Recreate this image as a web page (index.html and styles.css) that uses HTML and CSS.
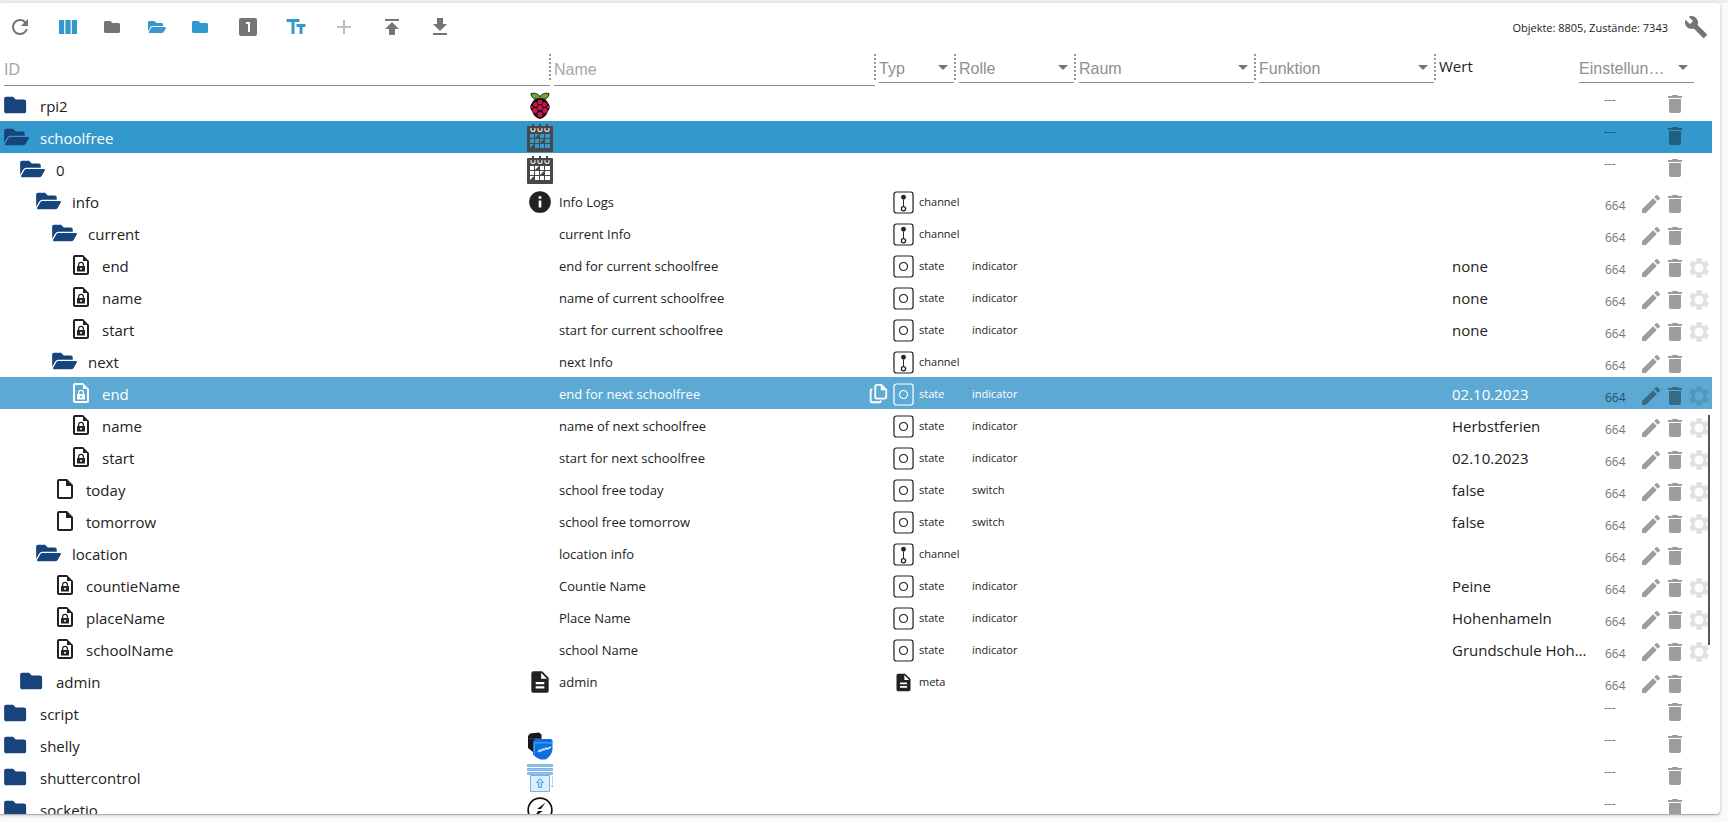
FILE: index.html
```html
<!DOCTYPE html>
<html lang="de">
<head>
    <meta charset="UTF-8">
    <meta name="viewport" content="width=device-width, initial-scale=1.0">
    <title>Objekte</title>
    <link rel="stylesheet" href="styles.css">
</head>
<body>
    <svg class="sprite" aria-hidden="true">
        <symbol id="refresh" viewBox="0 0 24 24"><path d="M17.65 6.35A7.96 7.96 0 0 0 12 4a8 8 0 1 0 7.73 10h-2.08A6 6 0 1 1 12 6c1.66 0 3.14.69 4.22 1.78L13 11h7V4z"/></symbol>
        <symbol id="columns" viewBox="0 0 24 24"><path d="M9.4 19h5.2V5H9.4zM3 19h5.2V5H3zM15.8 5v14H21V5z"/></symbol>
        <symbol id="folder" viewBox="0 0 576 512"><path d="M464 128H272l-64-64H48C21.5 64 0 85.5 0 112v288c0 26.5 21.5 48 48 48h416c26.5 0 48-21.5 48-48V176c0-26.5-21.5-48-48-48z"/></symbol>
        <symbol id="folder-open" viewBox="0 0 576 512"><path d="M572.7 292.1 500.3 416.2A64 64 0 0 1 445 448H45c-18.5 0-30-20-20.7-36l72.4-124.2A64 64 0 0 1 152 256h400c18.5 0 30 20 20.7 36.1zM152 224h328v-48c0-26.5-21.5-48-48-48H272l-64-64H48C21.5 64 0 85.5 0 112v278l69-118.4C86.2 242.2 118 224 152 224z"/></symbol>
        <symbol id="one" viewBox="0 0 24 24"><path d="M19 3H5a2 2 0 0 0-2 2v14c0 1.1.9 2 2 2h14a2 2 0 0 0 2-2V5a2 2 0 0 0-2-2zm-5 14h-2V9h-2V7h4z"/></symbol>
        <symbol id="text-size" viewBox="0 0 24 24"><path d="M2.5 4v3h5v12h3V7h5V4zm19 5h-9v3h3v7h3v-7h3z"/></symbol>
        <symbol id="plus" viewBox="0 0 24 24"><path d="M19 13h-6v6h-2v-6H5v-2h6V5h2v6h6z"/></symbol>
        <symbol id="upload" viewBox="0 0 24 24"><path d="M5 4v2h14V4zm0 10h4v6h6v-6h4l-7-7z"/></symbol>
        <symbol id="download" viewBox="0 0 24 24"><path d="M19 9h-4V3H9v6H5l7 7zM5 18v2h14v-2z"/></symbol>
        <symbol id="wrench" viewBox="0 0 24 24"><path d="m22.7 19-9.1-9.1c.9-2.3.4-5-1.5-6.9-2-2-5-2.4-7.4-1.3L9 6 6 9 1.6 4.7C.4 7.1.9 10.1 2.9 12.1c1.9 1.9 4.6 2.4 6.9 1.5l9.1 9.1c.4.4 1 .4 1.4 0l2.3-2.3c.5-.4.5-1.1.1-1.4z"/></symbol>
        <symbol id="edit" viewBox="0 0 24 24"><path d="M3 17.25V21h3.75L17.81 9.94l-3.75-3.75zM20.71 7.04a1 1 0 0 0 0-1.41l-2.34-2.34a1 1 0 0 0-1.41 0l-1.83 1.83 3.75 3.75z"/></symbol>
        <symbol id="trash" viewBox="0 0 24 24"><path d="M6 19c0 1.1.9 2 2 2h8a2 2 0 0 0 2-2V7H6zM19 4h-3.5l-1-1h-5l-1 1H5v2h14z"/></symbol>
        <symbol id="gear" viewBox="0 0 24 24"><path d="M19.43 12.98a7.8 7.8 0 0 0 0-1.96l2.11-1.65a.5.5 0 0 0 .12-.64l-2-3.46a.5.5 0 0 0-.61-.22l-2.49 1a7.3 7.3 0 0 0-1.69-.98l-.38-2.65A.5.5 0 0 0 14 2h-4a.5.5 0 0 0-.49.42l-.38 2.65c-.61.25-1.17.59-1.69.98l-2.49-1a.5.5 0 0 0-.61.22l-2 3.46a.5.5 0 0 0 .12.64l2.11 1.65a7.9 7.9 0 0 0 0 1.96l-2.11 1.65a.5.5 0 0 0-.12.64l2 3.46c.12.22.39.3.61.22l2.49-1c.52.4 1.08.73 1.69.98l.38 2.65c.03.24.24.42.49.42h4c.25 0 .46-.18.49-.42l.38-2.65c.61-.25 1.17-.59 1.69-.98l2.49 1c.23.09.49 0 .61-.22l2-3.46a.5.5 0 0 0-.12-.64zM12 16.5a4.5 4.5 0 1 1 0-9 4.5 4.5 0 0 1 0 9z"/></symbol>
        <symbol id="file" viewBox="0 0 24 24"><path d="M14 2H6a2 2 0 0 0-2 2v16c0 1.1.9 2 2 2h12a2 2 0 0 0 2-2V8zM6 20V4h7v5h5v11z"/></symbol>
        <symbol id="file-lock" viewBox="0 0 24 24"><path d="M14 2H6a2 2 0 0 0-2 2v16c0 1.1.9 2 2 2h12a2 2 0 0 0 2-2V8zM6 20V4h8v4h4v12z"/><path d="M15 13v-1.2a3 3 0 0 0-6 0V13H8v5.5h8V13zm-4.800 0v-1.2a1.800 1.800 0 0 1 3.600 0V13zm1.800 3.700a1 1 0 1 1 0-2 1 1 0 0 1 0 2z"/></symbol>
        <symbol id="document" viewBox="0 0 24 24"><path d="M14 2H6a2 2 0 0 0-2 2v16c0 1.1.9 2 2 2h12a2 2 0 0 0 2-2V8zm2 16H8v-2h8zm0-4H8v-2h8zm-3-5V3.5L18.5 9z"/></symbol>
        <symbol id="info" viewBox="0 0 24 24"><path d="M12 2a10 10 0 1 0 0 20 10 10 0 0 0 0-20zm1.200 15h-2.400v-6.500h2.400zm0-8h-2.400V6.600h2.400z"/></symbol>
        <symbol id="copy" viewBox="0 0 24 24"><path d="M16 1h-5a3 3 0 0 0-3 3v11a3 3 0 0 0 3 3h8a3 3 0 0 0 3-3V7zm-5 15a1 1 0 0 1-1-1V4a1 1 0 0 1 1-1h4v5h5v7a1 1 0 0 1-1 1zM6 6v2H5v12h9v-1h2v1a2 2 0 0 1-2 2H5a2 2 0 0 1-2-2V8a2 2 0 0 1 2-2z"/></symbol>
        <symbol id="state" viewBox="0 0 22 24"><rect x="1" y="1" width="20" height="22" rx="2.500" fill="none" stroke="currentColor" stroke-width="1.300"/><circle cx="11" cy="12" r="4.200" fill="none" stroke="currentColor" stroke-width="1.200"/></symbol>
        <symbol id="channel" viewBox="0 0 22 24"><rect x="1" y="1" width="20" height="22" rx="2.500" fill="none" stroke="currentColor" stroke-width="1.300"/><circle cx="11" cy="6.500" r="2.500"/><path d="M10.500 9h1v7h-1z"/><circle cx="11" cy="18.500" r="2.200" fill="none" stroke="currentColor" stroke-width="1.400"/></symbol>
        <symbol id="raspberry" viewBox="0 0 26 28">
            <path fill="#6aa636" stroke="#1f2a12" d="M12.500 7C8 8 4 6 4 1.500 8 .5 12 2 13 5c1-3 5-4.500 9-3.500C22 6 18 8 13.500 7z"/>
            <path fill="#2a0a14" d="M13 6c5 0 7 2.500 8 5 2 1.500 2.500 6 0 8-1 4-4 7-8 8-4-1-7-4-8-8-2.500-2-2-6.500 0-8 1-2.500 3-5 8-5z"/>
            <g fill="#c51a4a"><circle cx="13" cy="10" r="2.300"/><circle cx="8.500" cy="12.500" r="2.300"/><circle cx="17.500" cy="12.500" r="2.300"/><circle cx="13" cy="15.500" r="2.600"/><circle cx="8" cy="18.500" r="2.500"/><circle cx="18" cy="18.500" r="2.500"/><circle cx="13" cy="22.500" r="2.600"/><circle cx="4.800" cy="15" r="1.200"/><circle cx="21.200" cy="15" r="1.200"/></g>
        </symbol>
        <symbol id="calendar" viewBox="0 0 26 28">
            <path fill="#484848" fill-rule="evenodd" d="M1 2h4V0h2v2h5V0h2v2h5V0h2v2h4a1 1 0 0 1 1 1v24a1 1 0 0 1-1 1H1a1 1 0 0 1-1-1V3a1 1 0 0 1 1-1zm2 8v4h4v-4zm5 0v4l4-4zm5 0v4h4v-4zm5 0v4h5v-4zM3 15v4h4v-4zm5 0v4h4v-4zm5 0v4l4-4zm5 0v4h5v-4zM3 20v4l4-4zm5 0v4h4v-4zm5 0v4h4v-4zm5 0v4h5v-4z"/>
            <path fill="none" stroke="#ddd" stroke-width="1.200" d="M4 4v1.500a2 2 0 0 0 4 0V4m3 0v1.500a2 2 0 0 0 4 0V4m3 0v1.500a2 2 0 0 0 4 0V4"/>
        </symbol>
        <symbol id="shelly" viewBox="0 0 26 28">
            <path fill="#15181d" d="M3 1.500 12 .5l2.500 2V20H6l-5-4V4z"/><path fill="#3c4148" d="M2 6h12v1H2z"/>
            <path fill="#0b6fe0" d="m6 9 2-2h16l1.500 1.500V18c-1 4-3 7.500-7 9.500h-5c-3-1-5.500-3-7.500-5z"/><path fill="#3b9bff" d="M7 10h18v1.500H8V22H7z"/>
            <path fill="none" stroke="#d5eaff" stroke-width="1.500" d="m11 20 2-2 1 1 2-2 1 1 2-2 1 1 4-2"/>
        </symbol>
        <symbol id="shutter" viewBox="0 0 26 28">
            <path fill="#d9efff" stroke="#7db4e4" d="M3.500 11.500h19v16h-19z"/>
            <path fill="#9ac8f0" stroke="#7db4e4" d="M.5.5h25v2H.5zm0 4h25v2H.5zm0 4h25v2H.5z"/>
            <path fill="#b9dcf8" stroke="#5f9ed6" d="m13 14.500 3.500 4h-2v5h-3v-5h-2z"/><path fill="#7db4e4" d="M25 12h.5v9H25zm-.5 9.500h1.500V23h-1.500z"/>
        </symbol>
        <symbol id="socket" viewBox="0 0 28 28"><circle cx="14" cy="14" r="12.800" fill="#fff" stroke="#111" stroke-width="1.800"/><path fill="#111" d="m20 6-9 7h4zM8 21.500l9-6.500h-5z"/></symbol>
    </svg>

    <main class="panel">
        <header class="toolbar">
            <button class="tool" aria-label="Aktualisieren"><svg><use href="#refresh"/></svg></button>
            <button class="tool active" aria-label="Spalten"><svg><use href="#columns"/></svg></button>
            <button class="tool small" aria-label="Alle zuklappen"><svg><use href="#folder"/></svg></button>
            <button class="tool small active" aria-label="Alle aufklappen"><svg><use href="#folder-open"/></svg></button>
            <button class="tool small active" aria-label="Ordner"><svg><use href="#folder"/></svg></button>
            <button class="tool" aria-label="Ebene 1"><svg><use href="#one"/></svg></button>
            <button class="tool active" aria-label="Textgröße"><svg><use href="#text-size"/></svg></button>
            <button class="tool" aria-label="Hinzufügen" disabled><svg><use href="#plus"/></svg></button>
            <button class="tool" aria-label="Hochladen"><svg><use href="#upload"/></svg></button>
            <button class="tool" aria-label="Herunterladen"><svg><use href="#download"/></svg></button>
            <span class="stats">Objekte: 8805, Zustände: 7343</span>
            <button class="tool" aria-label="Werkzeuge"><svg><use href="#wrench"/></svg></button>
        </header>

        <div class="browser">
            <table class="objects">
                <colgroup>
                    <col class="col-id"><col class="col-name"><col class="col-type"><col class="col-role"><col class="col-room"><col class="col-func"><col class="col-value"><col class="col-rest"><col class="col-settings">
                </colgroup>
                <thead>
                    <tr>
                        <th class="split"><input class="filter" placeholder="ID" aria-label="ID"></th>
                        <th class="split"><input class="filter" placeholder="Name" aria-label="Name"></th>
                        <th class="split"><div class="dropdown"><select aria-label="Typ"><option>Typ</option></select></div></th>
                        <th class="split"><div class="dropdown"><select aria-label="Rolle"><option>Rolle</option></select></div></th>
                        <th class="split"><div class="dropdown"><select aria-label="Raum"><option>Raum</option></select></div></th>
                        <th class="split"><div class="dropdown"><select aria-label="Funktion"><option>Funktion</option></select></div></th>
                        <th class="value-head">Wert</th>
                        <th class="settings-head" colspan="2"><div class="dropdown"><select aria-label="Einstellungen"><option>Einstellungen</option></select></div></th>
                    </tr>
                </thead>
                <tbody id="rows"></tbody>
            </table>
            <div class="scrollbar"></div>
        </div>
    </main>

    <script src="objects.js"></script>
</body>
</html>
```

FILE: objects.js
```js
// level, id, tree icon, own icon, name, type, role, value, row class
const objects = [
    [0, 'rpi2', 'folder', 'raspberry'],
    [0, 'schoolfree', 'folder-open', 'calendar', '', '', '', '', 'selected'],
    [1, '0', 'folder-open', 'calendar'],
    [2, 'info', 'folder-open', 'info', 'Info Logs', 'channel'],
    [3, 'current', 'folder-open', '', 'current Info', 'channel'],
    [4, 'end', 'file-lock', '', 'end for current schoolfree', 'state', 'indicator', 'none'],
    [4, 'name', 'file-lock', '', 'name of current schoolfree', 'state', 'indicator', 'none'],
    [4, 'start', 'file-lock', '', 'start for current schoolfree', 'state', 'indicator', 'none'],
    [3, 'next', 'folder-open', '', 'next Info', 'channel'],
    [4, 'end', 'file-lock', '', 'end for next schoolfree', 'state', 'indicator', '02.10.2023', 'hovered'],
    [4, 'name', 'file-lock', '', 'name of next schoolfree', 'state', 'indicator', 'Herbstferien'],
    [4, 'start', 'file-lock', '', 'start for next schoolfree', 'state', 'indicator', '02.10.2023'],
    [3, 'today', 'file', '', 'school free today', 'state', 'switch', 'false'],
    [3, 'tomorrow', 'file', '', 'school free tomorrow', 'state', 'switch', 'false'],
    [2, 'location', 'folder-open', '', 'location info', 'channel'],
    [3, 'countieName', 'file-lock', '', 'Countie Name', 'state', 'indicator', 'Peine'],
    [3, 'placeName', 'file-lock', '', 'Place Name', 'state', 'indicator', 'Hohenhameln'],
    [3, 'schoolName', 'file-lock', '', 'school Name', 'state', 'indicator', 'Grundschule Hohenhameln'],
    [1, 'admin', 'folder', 'document', 'admin', 'meta'],
    [0, 'script', 'folder'],
    [0, 'shelly', 'folder', 'shelly'],
    [0, 'shuttercontrol', 'folder', 'shutter'],
    [0, 'socketio', 'folder', 'socket']
];

function icon(name, cls) {
    return `<svg class="${cls || ''}"><use href="#${name}"/></svg>`;
}

function action(name, label) {
    return `<button class="action ${name}" aria-label="${label}">${icon(name)}</button>`;
}

function renderRow([level, id, treeIcon, ownIcon, name = '', type = '', role = '', value = '', cls = '']) {
    const leaf = treeIcon.startsWith('file');
    const typeIcon = type === 'meta' ? 'document' : type;
    return `<tr class="${cls}">
        <td><div class="cell id" style="padding-left: ${level * 16 + 4}px">
            ${icon(treeIcon, leaf ? 'leaf' : 'branch')}<span>${id}</span>
            ${ownIcon ? icon(ownIcon, 'own') : ''}
        </div></td>
        <td><div class="cell name"><span>${name}</span>${cls === 'hovered' ? action('copy', 'Kopieren') : ''}</div></td>
        <td><div class="cell type">${type ? icon(typeIcon) + `<span>${type}</span>` : ''}</div></td>
        <td><div class="cell role">${role}</div></td>
        <td></td>
        <td></td>
        <td colspan="2"><div class="value">${value}</div></td>
        <td><div class="cell settings ${type ? 'has-object' : ''}">
            <span class="rights">${type ? '664' : '---'}</span>
            ${type ? action('edit', 'Bearbeiten') : ''}
            ${action('trash', 'Löschen')}
            ${type === 'state' ? action('gear', 'Einstellungen') : ''}
        </div></td>
    </tr>`;
}

document.getElementById('rows').innerHTML = objects.map(renderRow).join('');
```

FILE: styles.css
```css
* {
    box-sizing: border-box;
}
body {
    margin: 0;
    height: 100vh;
    padding: 3px 8px 8px 0;
    background: #fafafa;
    box-shadow: inset 0 3px #eee;
    font-family: "Open Sans", "Noto Sans", sans-serif;
    font-size: 15px;
    color: #222;
}
.sprite {
    display: none;
}
svg {
    display: block;
    flex: none;
    fill: currentColor;
}
button {
    display: flex;
    align-items: center;
    justify-content: center;
    padding: 0;
    border: 0;
    background: none;
    color: inherit;
    cursor: pointer;
}
.panel {
    display: flex;
    flex-direction: column;
    height: 100%;
    overflow: hidden;
    background: #fff;
    border-radius: 0 4px 4px 0;
    box-shadow: 0 1px 1px #aaa, 0 1px 4px rgba(0, 0, 0, 0.2);
}

/* toolbar */
.toolbar {
    display: flex;
    flex: none;
    align-items: center;
    gap: 8px;
    height: 48px;
    padding-right: 4px;
}
.tool {
    width: 40px;
    height: 40px;
    color: #757575;
}
.tool svg {
    width: 24px;
    height: 24px;
}
.tool.small {
    width: 36px;
    padding-right: 2px;
}
.tool.small svg {
    width: 18px;
    height: 16px;
}
.tool.active {
    color: #3399cc;
}
.tool:disabled {
    color: #bdbdbd;
}
.stats {
    margin-left: auto;
    font-size: 11px;
}

/* object table */
.browser {
    position: relative;
    flex: 1;
    overflow: hidden;
    padding-right: 8px;
}
.objects {
    width: 100%;
    table-layout: fixed;
    border-collapse: collapse;
}
.col-name {
    width: 325px;
}
.col-type {
    width: 80px;
}
.col-role {
    width: 120px;
}
.col-room,
.col-func {
    width: 180px;
}
.col-value {
    width: 140px;
}
.col-rest {
    width: 12px;
}
.col-settings {
    width: 124px;
}
th {
    height: 38px;
    padding: 0 1px 0 3px;
    vertical-align: top;
    text-align: left;
    font-weight: normal;
}
th.split {
    background: repeating-linear-gradient(#999 0 2px, transparent 2px 4px) right 3px / 2px 26px no-repeat;
}
th.split:first-child {
    padding-left: 4px;
}
.filter,
.dropdown select {
    display: block;
    width: 100%;
    padding: 0;
    border: 0;
    border-bottom: 1px solid #8c8c8c;
    border-radius: 0;
    outline: 0;
    background: none;
    font: 16px "Liberation Sans", Arial, sans-serif;
}
.filter {
    height: 35px;
    padding-top: 3px;
}
.filter::placeholder {
    color: #a6a6a6;
}
.dropdown {
    position: relative;
    margin-right: 1px;
}
.dropdown select {
    height: 32px;
    padding: 3px 24px 0 0;
    appearance: none;
    overflow: hidden;
    text-overflow: ellipsis;
    color: #8f8f8f;
}
.dropdown::after {
    content: "";
    position: absolute;
    top: 14px;
    right: 6px;
    border: 5px solid transparent;
    border-top-color: #757575;
    border-bottom: 0;
    pointer-events: none;
}
.value-head {
    line-height: 31px;
}
.settings-head {
    padding-right: 17px;
}
td {
    height: 32px;
    padding: 0;
}
.cell {
    display: flex;
    align-items: center;
    height: 32px;
    white-space: nowrap;
}
.id,
.name,
.value {
    padding-top: 2px;
}
.id {
    gap: 8px;
}
.branch {
    width: 25px;
    height: 22px;
    margin: 0 3px 2px 0;
    color: #17457b;
}
.leaf {
    width: 24px;
    height: 24px;
    margin: 0 1px 2px 1px;
}
.own {
    width: 26px;
    height: 28px;
    margin-left: auto;
    margin-right: -2px;
}
.name {
    padding-left: 8px;
    font-size: 13px;
}
.name span {
    flex: 1;
}
.copy {
    margin-right: -14px;
}
.copy svg {
    width: 24px;
    height: 22px;
}
.type {
    gap: 5px;
    padding-left: 17px;
    font-size: 11px;
}
.type svg {
    width: 21px;
    height: 23px;
    margin-top: 2px;
}
.role {
    padding-left: 16px;
    font-size: 11px;
}
.value {
    padding-left: 16px;
    overflow: hidden;
    white-space: nowrap;
    text-overflow: ellipsis;
}
.settings {
    display: grid;
    grid-template-columns: 35px 24px 24px 24px;
    padding-left: 16px;
    padding-bottom: 2px;
    font-size: 12px;
    color: #757575;
}
.settings.has-object {
    padding: 6px 0 0 17px;
    grid-template-columns: 34px 24px 24px 24px;
}
.settings svg {
    width: 24px;
    height: 24px;
}
.edit,
.trash {
    color: #9d9d9d;
}
.trash {
    grid-column: 3;
}
.gear {
    color: #e0e0e0;
}
.rights {
    padding-top: 2px;
}
.settings:not(.has-object) .rights {
    align-self: start;
}

/* highlighted rows */
.selected {
    background: #3399cc;
}
.selected .id span,
.hovered {
    color: #fff;
}
.hovered {
    background: #5caad4;
}
.selected .settings,
.hovered .settings {
    color: #1f4f6d;
}
.selected .trash {
    color: #205f80;
}
.hovered .edit,
.hovered .trash {
    color: #376a85;
}
.hovered .gear {
    color: #4f97bd;
}
.scrollbar {
    position: absolute;
    top: 364px;
    right: 10px;
    width: 2px;
    height: 230px;
    background: #555;
}
```
